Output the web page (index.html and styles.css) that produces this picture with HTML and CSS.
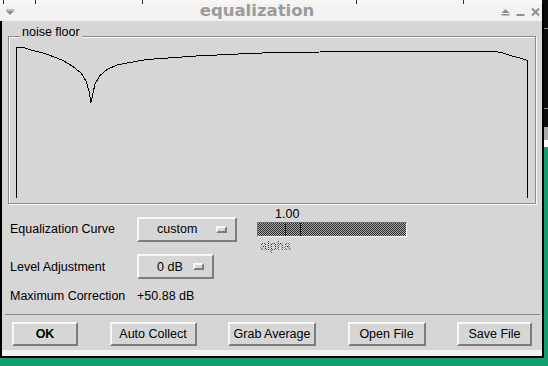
FILE: index.html
```html
<!DOCTYPE html>
<html lang="en">
<head>
  <meta charset="UTF-8">
  <title>equalization</title>
  <link rel="stylesheet" href="styles.css">
</head>
<body>

<!-- Equalization dialog -->
<div class="window">
  <div class="titlebar">
    <div class="title-left">
      <svg width="8" height="9" viewBox="0 0 8 9"><rect x="0" y="1.5" width="8" height="1" fill="#8e8e8e"/><polygon points="0,3 8,3 4,7" fill="#8e8e8e"/></svg>
    </div>
    <div class="title">equalization</div>
    <div class="title-buttons">
      <svg width="9" height="9" viewBox="0 0 9 9"><polygon points="4.5,1 8.5,5 0.5,5" fill="#8e8e8e"/><rect x="0.5" y="6" width="8" height="1.5" fill="#8e8e8e"/></svg>
      <svg width="9" height="9" viewBox="0 0 9 9"><rect x="0.5" y="6" width="8" height="2" fill="#8e8e8e"/></svg>
      <svg width="9" height="9" viewBox="0 0 9 9"><path d="M1 0.5 L8 7.5 M8 0.5 L1 7.5" stroke="#8e8e8e" stroke-width="2"/></svg>
    </div>
  </div>

  <div class="client">
    <div class="frame">
      <span class="frame-label">noise floor</span>
      <svg class="plot" width="526" height="166" viewBox="9 37 526 166">
        <polyline fill="none" stroke="#000" stroke-width="1" shape-rendering="crispEdges"
          points="16.5,198 16.5,47.5 23,47.5 33,50.5 43,53 53,56.5 63,60.5 73,66.5 81,73 86,81 89,91 91,102.5 93,93 95,84 100,75.5 107,69.5 117,65 130,62.5 147,59.5 196,56 238,54 270,52.7 320,52 370,51.7 440,51.3 495,51.5 503,53 512,56 522,58.5 527.5,60.5 527.5,198"/>
      </svg>
    </div>

    <div class="controls">
      <div class="label">Equalization Curve</div>
      <div class="cell">
        <div class="menubutton menubutton-wide">custom<span class="indicator"></span></div>
      </div>
      <div class="scale">
        <div class="scale-value">1.00</div>
        <div class="trough"><div class="slider"></div></div>
        <div class="scale-label">alpha</div>
      </div>

      <div class="label">Level Adjustment</div>
      <div class="cell">
        <div class="menubutton">0 dB<span class="indicator"></span></div>
      </div>
      <div></div>

      <div class="label">Maximum Correction</div>
      <div class="label">+50.88 dB</div>
    </div>

    <div class="separator"></div>

    <div class="buttons">
      <button class="btn btn-ok">OK</button>
      <button class="btn btn-auto">Auto Collect</button>
      <button class="btn btn-grab">Grab Average</button>
      <button class="btn btn-open">Open File</button>
      <button class="btn btn-save">Save File</button>
    </div>
  </div>
  <div class="bottom-edge"></div>
</div>

</body>
</html>
```

FILE: styles.css
```css
body {
  margin: 0;
  padding-top: 4px;
  width: 548px;
  height: 362px;
  overflow: hidden;
  font-family: "Liberation Sans", Arial, sans-serif;
  font-size: 12.5px;
  color: #000;
  background-color: #12a070;
  /* desktop behind the dialog: ruler ticks on top, another window on the right */
  background-image:
    linear-gradient(#333, #333),
    linear-gradient(#333, #333),
    linear-gradient(#333, #333),
    linear-gradient(#333, #333),
    linear-gradient(#333, #333),
    linear-gradient(#f6f6f4, #f6f6f4),
    linear-gradient(#0c0c0c 0 28px, #8a8a8a 28px 29px, #0c0c0c 29px 108px, #8a8a8a 108px 109px, #0c0c0c 109px 127px, #a9a9a9 127px 140px, #fbfbfb 140px 147px, transparent 147px);
  background-repeat: no-repeat;
  background-size: 1px 4px, 1px 4px, 1px 4px, 1px 4px, 1px 4px, 542px 4px, 6px 366px;
  background-position: 3px 0, 35px 0, 142px 0, 356px 0, 463px 0, 0 0, 542px 0;
}

.window {
  width: 542px;
  border-right: 2px solid #000;
  border-bottom: 2px solid #000;
}

/* title bar */
.titlebar {
  height: 17px;
  display: flex;
  background: #f3f2f0;
}

.title-left {
  width: 16px;
  padding-left: 6px;
  box-sizing: border-box;
  display: flex;
  align-items: center;
}

.title {
  flex: 1;
  text-align: center;
  font: bold 16.5px/14px "DejaVu Sans", sans-serif;
  color: #9b9b9b;
}

.title-buttons {
  width: 44px;
  padding-left: 3px;
  box-sizing: border-box;
  display: flex;
  gap: 6px;
  align-items: center;
}

.title-left svg,
.title-buttons svg {
  display: block;
}

/* dialog body */
.client {
  height: 329px;
  box-sizing: border-box;
  padding-top: 15px;
  border-left: 2px solid #000;
  background: #d6d6d6;
}

.bottom-edge {
  height: 6px;
  border-left: 2px solid #000;
  background: #f3f2f0;
}

.frame {
  position: relative;
  width: 528px;
  height: 168px;
  margin-left: 6px;
  box-sizing: border-box;
  border: 1px solid #8b8b8b;
  box-shadow: inset 1px 1px 0 #fbfbfb, 1px 1px 0 #fbfbfb;
}

.frame-label {
  position: absolute;
  left: 11px;
  top: -12px;
  padding: 0 2px;
  line-height: 14px;
  background: #d6d6d6;
}

.plot {
  display: block;
}

.controls {
  display: grid;
  grid-template-columns: 127px 120px 1fr;
  grid-template-rows: 46px 25px 29px;
  row-gap: 2px;
  padding: 2px 0 0 8px;
}

.label {
  align-self: center;
  line-height: 14px;
}

.cell {
  align-self: center;
}

.menubutton {
  width: 77px;
  height: 25px;
  box-sizing: border-box;
  padding: 0 8px 0 18px;
  display: flex;
  align-items: center;
  justify-content: space-between;
  border: 2px solid;
  border-color: #f8f8f8 #7c7c7c #7c7c7c #f8f8f8;
}

.menubutton-wide {
  width: 100px;
}

.indicator {
  width: 11px;
  height: 7px;
  box-sizing: border-box;
  border: 2px solid;
  border-color: #f8f8f8 #7c7c7c #7c7c7c #f8f8f8;
}

/* disabled alpha scale */
.scale {
  padding-top: 1px;
  width: 150px;
}

.scale-value {
  line-height: 14px;
  padding-left: 18px;
}

.trough {
  position: relative;
  height: 15px;
  margin-top: 1px;
  box-sizing: border-box;
  border: 1px solid;
  border-color: #6f6f6f #fbfbfb #fbfbfb #6f6f6f;
  background-image: conic-gradient(#2e2e2e 25%, #a8a8a8 0 50%, #2e2e2e 0 75%, #a8a8a8 0);
  background-size: 2px 2px;
}

.slider {
  position: absolute;
  top: 0;
  bottom: 0;
  left: 27px;
  width: 16px;
  box-sizing: border-box;
  border-left: 1px solid #1c1c1c;
  border-right: 1px solid #1c1c1c;
}

.scale-label {
  margin-top: 2px;
  padding-left: 3px;
  line-height: 14px;
  width: max-content;
  color: transparent;
  background-image: conic-gradient(#2a2a2a 25%, transparent 0 50%, #2a2a2a 0 75%, transparent 0);
  background-size: 2px 2px;
  -webkit-background-clip: text;
  background-clip: text;
}

.separator {
  margin: 4px 2px 0 3px;
  border-top: 1px solid #8a8a8a;
}

/* bottom buttons */
.buttons {
  display: flex;
  justify-content: space-between;
  margin-top: 7px;
  padding: 0 10px;
}

.btn {
  height: 24px;
  padding: 0;
  font: 12.5px "Liberation Sans", Arial, sans-serif;
  color: #000;
  background: #d6d6d6;
  border: 2px solid;
  border-color: #f8f8f8 #7c7c7c #7c7c7c #f8f8f8;
}

.btn-ok {
  width: 66px;
  font-weight: bold;
}

.btn-auto {
  width: 87px;
}

.btn-grab {
  width: 88px;
}

.btn-open {
  width: 78px;
}

.btn-save {
  width: 75px;
}
```
